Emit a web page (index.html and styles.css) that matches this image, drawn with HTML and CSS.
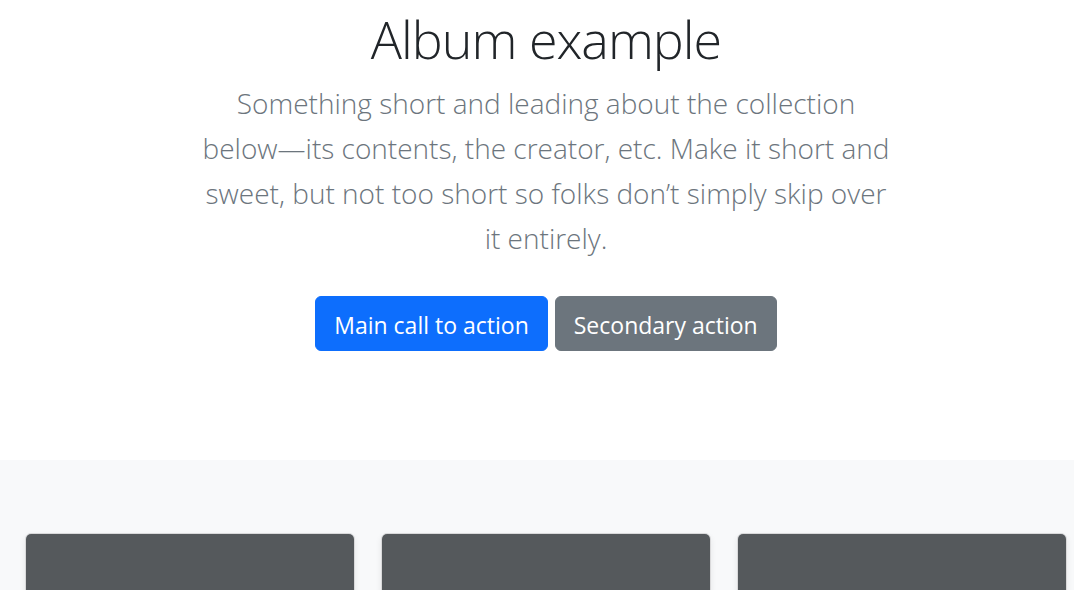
FILE: index.html
```html
<!DOCTYPE html>
<html lang="en">
<head>
<meta charset="utf-8">
<title>Album example</title>
<link rel="stylesheet" href="styles.css">
</head>
<body>
<main class="page">
  <section class="hero">
    <h1 class="hero-title">Album example</h1>
    <p class="lead">Something short and leading about the collection<br>below—its contents, the creator, etc. Make it short and<br>sweet, but not too short so folks don’t simply skip over<br>it entirely.</p>
    <div class="actions">
      <a class="btn btn-primary" href="#">Main call to action</a>
      <a class="btn btn-secondary" href="#">Secondary action</a>
    </div>
  </section>
  <section class="album">
    <div class="grid">
      <div class="card"><div class="thumb"></div></div>
      <div class="card"><div class="thumb"></div></div>
      <div class="card"><div class="thumb"></div></div>
    </div>
  </section>
</main>
</body>
</html>
```

FILE: styles.css
```css
html {
  overflow: hidden;
}
body {
  margin: 0;
  background: #fff;
  font-family: "Open Sans", "Noto Sans", sans-serif;
  color: #212529;
}
.page {
  width: 1092px;
}
.hero {
  text-align: center;
  padding-top: 3px;
}
.hero-title {
  margin: 0;
  font-size: 52px;
  font-weight: 300;
  letter-spacing: -1px;
  line-height: 72px;
  color: #212529;
}
.lead {
  margin: 6px 0 0;
  font-size: 28px;
  font-weight: 300;
  line-height: 45px;
  color: #6c757d;
}
.actions {
  display: flex;
  justify-content: center;
  gap: 7px;
  margin-top: 35px;
}
.btn {
  display: inline-block;
  height: 55px;
  box-sizing: border-box;
  padding: 4px 18px 1px;
  line-height: 48px;
  font-size: 23px;
  font-weight: 400;
  color: #fff;
  text-decoration: none;
  border-radius: 6px;
  border: 1px solid transparent;
}
.btn-primary {
  background: #0d6efd;
  border-color: #0d6efd;
}
.btn-secondary {
  background: #6c757d;
  border-color: #6c757d;
}
.album {
  margin-top: 109px;
  background: #f8f9fa;
  padding: 73px 25px;
}
.grid {
  display: grid;
  grid-template-columns: repeat(3, 330px);
  gap: 26px;
}
.card {
  border: 1px solid rgba(0, 0, 0, 0.125);
  border-radius: 6px;
  overflow: hidden;
  box-shadow: 0 3px 6px rgba(0, 0, 0, 0.075);
}
.thumb {
  height: 340px;
  background: #55595c;
}
```
